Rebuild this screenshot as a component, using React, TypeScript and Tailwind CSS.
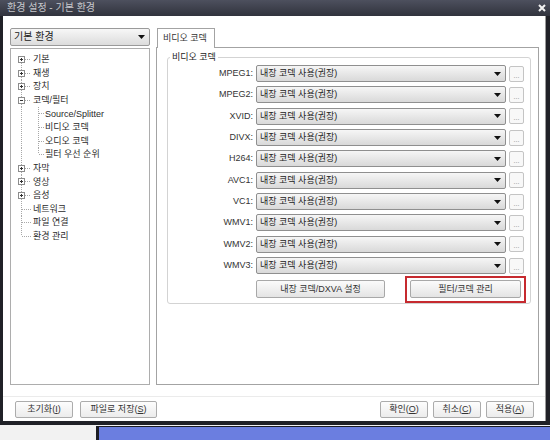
import React from 'react';

const F = "font-['Liberation_Sans','Noto_Sans_CJK_KR',sans-serif]";

const codecs = ['MPEG1', 'MPEG2', 'XVID', 'DIVX', 'H264', 'AVC1', 'VC1', 'WMV1', 'WMV2', 'WMV3'];

type Item = { t: string; lvl?: number; box?: 'plus' | 'minus'; first?: boolean; last?: boolean; cl?: boolean };

const tree: Item[] = [
  { t: '기본', box: 'plus', first: true },
  { t: '재생', box: 'plus' },
  { t: '장치', box: 'plus' },
  { t: '코덱/필터', box: 'minus' },
  { t: 'Source/Splitter', lvl: 1 },
  { t: '비디오 코덱', lvl: 1 },
  { t: '오디오 코덱', lvl: 1 },
  { t: '필터 우선 순위', lvl: 1, cl: true },
  { t: '자막', box: 'plus' },
  { t: '영상', box: 'plus' },
  { t: '음성', box: 'plus' },
  { t: '네트워크' },
  { t: '파일 연결' },
  { t: '환경 관리', last: true },
];

const H = 13.6;
const M = 6.5;

function TreeRow({ it }: { it: Item }) {
  const lvl = it.lvl ?? 0;
  const W = lvl === 0 ? 22 : 34;
  const dot = { stroke: '#a8a8a8', strokeWidth: 1, strokeDasharray: '1 1', shapeRendering: 'crispEdges' as const };
  return (
    <div className="flex h-[13.6px] items-center">
      <svg width={W} height={H} viewBox={`0 0 ${W} ${H}`} className="shrink-0">
        <line x1="10.5" x2="10.5" y1={it.first ? M : 0} y2={it.last ? M : H} {...dot} />
        {lvl === 0 && !it.box && <line x1="11" x2="20" y1={M} y2={M} {...dot} />}
        {lvl === 0 && it.box && <line x1="14" x2="20" y1={M} y2={M} {...dot} />}
        {lvl === 1 && (
          <>
            <line x1="27.5" x2="27.5" y1="0" y2={it.cl ? M : H} {...dot} />
            <line x1="28" x2="33" y1={M} y2={M} {...dot} />
          </>
        )}
        {it.box && (
          <>
            <rect x="7.5" y="3.5" width="6" height="6" fill="#fff" stroke="#8c8c8c" strokeWidth="1" shapeRendering="crispEdges" />
            <line x1="9" x2="12" y1="6.5" y2="6.5" stroke="#333" strokeWidth="1" shapeRendering="crispEdges" />
            {it.box === 'plus' && <line x1="10.5" x2="10.5" y1="5" y2="8" stroke="#333" strokeWidth="1" shapeRendering="crispEdges" />}
          </>
        )}
      </svg>
      <span className="text-[9px] leading-none text-[#2a2a2a] whitespace-nowrap">{it.t}</span>
    </div>
  );
}

function Arrow() {
  return (
    <svg width="7" height="4" viewBox="0 0 7 4" className="shrink-0">
      <path d="M0 0H7L3.5 4Z" fill="#111" />
    </svg>
  );
}

function Btn({ children, w }: { children: React.ReactNode; w: string }) {
  return (
    <div className={`${w} h-[18px] border border-[#a8a8a8] rounded-[2px] bg-linear-to-b from-[#fbfbfb] to-[#e4e4e4] flex items-center justify-center text-[9px] leading-none text-[#333] whitespace-nowrap`}>
      {children}
    </div>
  );
}

function BBtn({ children, w }: { children: React.ReactNode; w: string }) {
  return (
    <div className={`${w} h-[17px] border border-[#acacac] rounded-[2px] bg-linear-to-b from-[#fdfdfd] to-[#ececec] flex items-center justify-center text-[9px] leading-none text-[#333] whitespace-nowrap`}>
      {children}
    </div>
  );
}

export default function App() {
  return (
    <div className={`w-[550px] h-[440px] overflow-hidden bg-[#f2f2f2] flex flex-col ${F}`}>
      {/* window */}
      <div className="w-[550px] h-[425px] bg-[#202127] flex flex-col shrink-0">
        <div className="h-[16px] shrink-0 bg-linear-to-b from-[#4d505e] to-[#31333d] flex items-center justify-between pl-[7px] pr-[4px]">
          <span className="text-[10px] leading-none text-[#c6c7cc] whitespace-nowrap">환경 설정 - 기본 환경</span>
          <svg width="8" height="8" viewBox="0 0 8 8">
            <path d="M1 1L7 7M7 1L1 7" stroke="#f2f2f2" strokeWidth="2" />
          </svg>
        </div>
        <div className="flex-1 ml-[3px] mr-[4px] mb-[4px] bg-white border-r border-[#9a9a9a] flex flex-col">
          {/* main area */}
          <div className="h-[369px] shrink-0 flex pt-[12px] pl-[7px] gap-[6px]">
            {/* left column */}
            <div className="w-[140px] flex flex-col gap-[2px]">
              <div className="h-[18px] border border-[#9a9a9a] rounded-[2px] bg-linear-to-b from-[#f7f7f7] to-[#dcdcdc] flex items-center justify-between pl-[3px] pr-[4px]">
                <span className="text-[10px] leading-none text-[#222]">기본 환경</span>
                <Arrow />
              </div>
              <div className="flex-1 border border-[#adadad] pt-[4px]">
                {tree.map((it, i) => (
                  <TreeRow key={i} it={it} />
                ))}
              </div>
            </div>
            {/* right column */}
            <div className="w-[383px] flex flex-col">
              <div className="h-[20px] flex pl-[1px]">
                <div className="w-[58px] h-[20px] border border-[#a3a3a3] border-b-0 bg-white flex items-center pl-[5px] relative z-10 text-[9px] leading-none text-[#333]">
                  비디오 코덱
                </div>
              </div>
              <div className="flex-1 -mt-px border border-[#a3a3a3] pt-[4px] pl-[10px] pr-[7px]">
                <fieldset className="border border-[#d3d3d3] rounded-[3px] pb-0">
                  <legend className="ml-[2px] px-[2px] text-[9px] leading-[11px] text-[#222]">비디오 코덱</legend>
                  <div className="flex flex-col">
                    {codecs.map((c) => (
                      <div key={c} className="h-[21.33px] flex items-center">
                        <div className="w-[85px] text-right text-[9px] leading-none text-[#333]">{c}:</div>
                        <div className="ml-[3px] w-[250px] h-[17px] border border-[#8f8f8f] rounded-[2px] bg-linear-to-b from-[#f6f6f6] to-[#d9d9d9] flex items-center justify-between pl-[3px] pr-[4px]">
                          <span className="text-[9px] leading-none text-[#222] whitespace-nowrap">내장 코덱 사용(권장)</span>
                          <Arrow />
                        </div>
                        <div className="ml-[3px] w-[15px] h-[16px] border border-[#c4c4c4] rounded-[2px] bg-[#f8f8f8] flex items-end justify-center pb-[2px]">
                          <span className="text-[7px] leading-none text-[#888]">...</span>
                        </div>
                      </div>
                    ))}
                  </div>
                  <div className="flex items-start">
                    <div className="ml-[88px] mt-[4px]">
                      <Btn w="w-[129px]">내장 코덱/DXVA 설정</Btn>
                    </div>
                    <div className="ml-[20px] border-2 border-[#c62a2f] pt-[2px] pb-[3px] px-[3px]">
                      <Btn w="w-[111px]">필터/코덱 관리</Btn>
                    </div>
                  </div>
                </fieldset>
              </div>
            </div>
          </div>
          {/* bottom bar */}
          <div className="h-[11px] shrink-0" />
          <div className="flex-1 border-t border-[#ebebeb] pt-[4px] flex pl-[12px] pr-[11px]">
            <div className="flex gap-[7px]">
              <BBtn w="w-[58px]">
                초기화(<u>I</u>)
              </BBtn>
              <BBtn w="w-[77px]">
                파일로 저장(<u>S</u>)
              </BBtn>
            </div>
            <div className="flex-1" />
            <div className="flex gap-[5px]">
              <BBtn w="w-[48px]">
                확인(<u>O</u>)
              </BBtn>
              <BBtn w="w-[48px]">
                취소(<u>C</u>)
              </BBtn>
              <BBtn w="w-[48px]">
                적용(<u>A</u>)
              </BBtn>
            </div>
          </div>
        </div>
      </div>
      {/* below window */}
      <div className="flex-1 flex pt-[1px]">
        <div className="w-[96px]" />
        <div className="flex-1 border-l-[3px] border-t border-[#1c1d24] bg-[#6b7ee0]" />
      </div>
    </div>
  );
}
